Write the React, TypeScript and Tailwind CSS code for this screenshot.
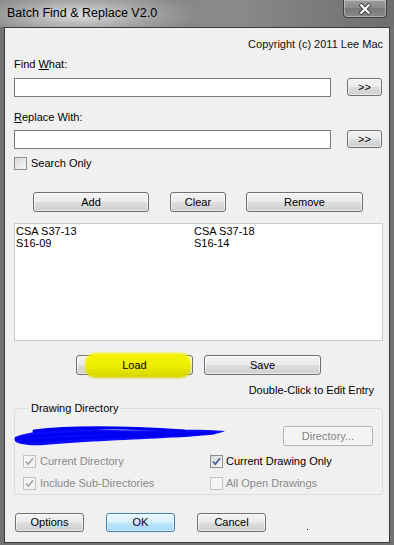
import React from 'react';

type BtnProps = {
    children: React.ReactNode;
    className?: string;
    focused?: boolean;
    disabled?: boolean;
};

function Btn({ children, className = '', focused, disabled }: BtnProps) {
    let look = 'border-[#707070] bg-[linear-gradient(#f3f3f3_0%,#ebebeb_48%,#dddddd_52%,#cfcfcf_100%)] text-black';
    if (focused) look = 'border-[#3c7fb1] bg-[linear-gradient(#eaf6fd_0%,#d9f0fc_48%,#bee6fd_52%,#a7d9f5_100%)] text-black';
    if (disabled) look = 'border-[#adb2b5] bg-[#f4f4f4] text-[#838383]';
    return (
        <div className={`relative flex items-center justify-center rounded-[3px] border shadow-[inset_0_0_0_1px_rgba(255,255,255,0.6)] text-[11px] leading-none ${look} ${className}`}>
            {children}
        </div>
    );
}

function Check({ checked, disabled }: { checked?: boolean; disabled?: boolean }) {
    return (
        <span className={`relative flex h-[13px] w-[13px] shrink-0 items-center justify-center border ${disabled ? 'border-[#c4c4c4] bg-[#f4f4f4]' : 'border-[#8e8f8f] bg-[linear-gradient(135deg,#d8d8d8,#f8f8f8)]'}`}>
            {checked && (
                <svg width="11" height="11" viewBox="0 0 11 11">
                    <path d="M2 5.5 L4.3 8.2 L9 2.2" fill="none" stroke={disabled ? '#a8a8a8' : '#4a5f97'} strokeWidth="1.8" />
                </svg>
            )}
        </span>
    );
}

function Label({ children }: { children: React.ReactNode }) {
    return <div className="h-[14px] text-[11px] leading-[14px] text-black">{children}</div>;
}

function App() {
    return (
        <div className="flex h-[545px] w-[394px] flex-col bg-[#727272] px-[4px] pb-[2px] font-['Liberation_Sans',Arial,sans-serif]">
            {/* title bar */}
            <div className="-mx-[4px] flex h-[27px] shrink-0 items-start justify-between bg-[radial-gradient(ellipse_120px_26px_at_78px_15px,rgba(225,225,225,0.95),rgba(200,200,200,0.5)_55%,rgba(140,140,140,0)_100%),linear-gradient(90deg,#7e7e7e,#8a8a8a_60%,#6e6e6e)]">
                <div className="ml-[7px] mt-[5px] text-[12.5px] leading-[16px] text-black">Batch Find &amp; Replace V2.0</div>
                <div className="mr-[7px] -mt-[1px] flex h-[19px] w-[44px] items-center justify-center rounded-b-[4px] border border-[#3d3d3d] bg-[linear-gradient(#9c9c9c,#8a8a8a_50%,#7a7a7a_50%,#8a8a8a)] shadow-[inset_0_0_0_1px_rgba(255,255,255,0.35)]">
                    <svg width="14" height="12" viewBox="0 0 14 12">
                        <path d="M2 1 L12 11 M12 1 L2 11" stroke="#3a3a3a" strokeWidth="4" />
                        <path d="M2.5 1.5 L11.5 10.5 M11.5 1.5 L2.5 10.5" stroke="#ffffff" strokeWidth="2.2" />
                    </svg>
                </div>
            </div>

            {/* client area */}
            <div className="flex flex-1 flex-col border border-[#3a3a3a] bg-[#f0f0f0] pl-[9px] pr-[6px]">
                <div className="mt-[9px] h-[14px] text-right text-[11px] leading-[14px] text-[#111]">Copyright (c) 2011 Lee Mac</div>

                <div className="mt-[6px]">
                    <Label>Find <span className="underline">W</span>hat:</Label>
                </div>
                <div className="mt-[7px] flex h-[19px] items-start">
                    <div className="h-[19px] w-[317px] border border-[#7a7a7a] bg-white" />
                    <Btn className="ml-[16px] h-[18px] w-[35px]">&gt;&gt;</Btn>
                </div>

                <div className="mt-[13px]">
                    <Label><span className="underline">R</span>eplace With:</Label>
                </div>
                <div className="mt-[6px] flex h-[19px] items-start">
                    <div className="h-[19px] w-[317px] border border-[#7a7a7a] bg-white" />
                    <Btn className="ml-[16px] h-[18px] w-[35px]">&gt;&gt;</Btn>
                </div>

                <div className="mt-[8px] flex h-[13px] items-center gap-[4px]">
                    <Check />
                    <span className="text-[11px] leading-[13px] text-black">Search Only</span>
                </div>

                <div className="mt-[22px] flex h-[20px]">
                    <Btn className="ml-[19px] h-[20px] w-[116px]">Add</Btn>
                    <Btn className="ml-[21px] h-[20px] w-[56px]">Clear</Btn>
                    <Btn className="ml-[20px] h-[20px] w-[117px]">Remove</Btn>
                </div>

                <div className="mt-[11px] h-[118px] border border-[#c9cbd4] bg-white px-[1px] pt-[1px]">
                    <div className="grid grid-cols-[178px_1fr] text-[11px] leading-[12px] text-black">
                        <div>CSA S37-13</div>
                        <div>CSA S37-18</div>
                        <div>S16-09</div>
                        <div>S16-14</div>
                    </div>
                </div>

                <div className="mt-[14px] flex h-[20px]">
                    <Btn className="ml-[62px] h-[20px] w-[117px]">
                        <span className="absolute left-[8px] top-[-3px] h-[25px] w-[106px] rounded-[10px] bg-[linear-gradient(#f6f600,#eeee00_50%,#d4d400)] blur-[1px]" />
                        <span className="relative">Load</span>
                    </Btn>
                    <Btn className="ml-[11px] h-[20px] w-[117px]">Save</Btn>
                </div>

                <div className="mt-[8px] h-[14px] pr-[9px] text-right text-[11px] leading-[14px] text-black">Double-Click to Edit Entry</div>

                <fieldset className="mt-[4px] h-[94px] rounded-[3px] border border-[#d5dfe5] px-[8px] pb-[5px]">
                    <legend className="ml-[6px] px-[2px] text-[11px] leading-[14px] text-black">Drawing Directory</legend>
                    <div className="mt-[11px] flex h-[20px] items-center justify-between">
                        <svg className="-ml-[9px]" width="214" height="22" viewBox="0 0 214 22">
                            <path d="M1 12 C 20 4, 60 2, 100 5 C 140 6, 180 3, 211 6 C 200 11, 170 12, 150 13 C 110 15, 60 17, 30 20 C 15 21, 3 19, 1 16 Z" fill="#0a0aff" />
                            <path d="M2 14 C 40 8, 90 7, 150 9 M8 17 C 50 12, 110 12, 200 8 M20 6 C 60 1, 110 2, 170 6" stroke="#0000f0" strokeWidth="3" fill="none" strokeLinecap="round" />
                        </svg>
                        <Btn disabled className="mr-[1px] h-[20px] w-[90px]">Directory...</Btn>
                    </div>
                    <div className="mt-[9px] grid h-[13px] grid-cols-[187px_1fr]">
                        <div className="flex items-center gap-[4px]">
                            <Check checked disabled />
                            <span className="text-[11px] leading-[13px] text-[#8a8a8a]">Current Directory</span>
                        </div>
                        <div className="flex items-center gap-[3px]">
                            <Check checked />
                            <span className="text-[11px] leading-[13px] text-black">Current Drawing Only</span>
                        </div>
                    </div>
                    <div className="mt-[9px] grid h-[13px] grid-cols-[187px_1fr]">
                        <div className="flex items-center gap-[4px]">
                            <Check checked disabled />
                            <span className="text-[11px] leading-[13px] text-[#8a8a8a]">Include Sub-Directories</span>
                        </div>
                        <div className="flex items-center gap-[3px]">
                            <Check disabled />
                            <span className="text-[11px] leading-[13px] text-[#8a8a8a]">All Open Drawings</span>
                        </div>
                    </div>
                </fieldset>

                <div className="mt-[18px] flex h-[19px] items-center">
                    <Btn className="ml-[1px] h-[19px] w-[69px]">Options</Btn>
                    <Btn focused className="ml-[22px] h-[19px] w-[69px]">OK</Btn>
                    <Btn className="ml-[22px] h-[19px] w-[69px]">Cancel</Btn>
                    <span className="ml-[41px] mt-[14px] h-[1px] w-[1px] bg-black" />
                </div>
            </div>
        </div>
    );
}

export default App;
